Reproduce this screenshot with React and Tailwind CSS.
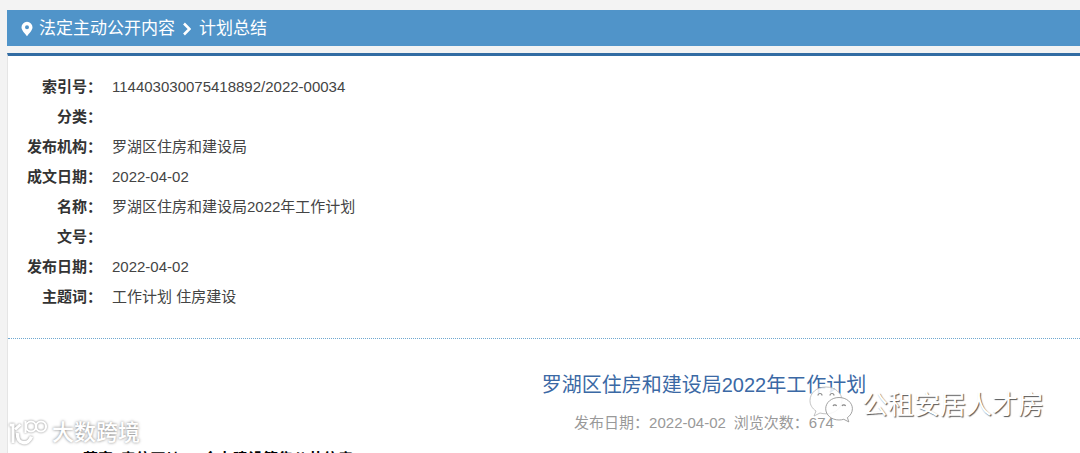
const details = [
    { label: '索引号', value: '114403030075418892/2022-00034' },
    { label: '分类', value: '' },
    { label: '发布机构', value: '罗湖区住房和建设局' },
    { label: '成文日期', value: '2022-04-02' },
    { label: '名称', value: '罗湖区住房和建设局2022年工作计划' },
    { label: '文号', value: '' },
    { label: '发布日期', value: '2022-04-02' },
    { label: '主题词', value: '工作计划 住房建设' },
];

const PinIcon = () => (
    <svg className="w-3 h-4 shrink-0" viewBox="0 0 12 16" fill="white" aria-hidden="true">
        <path fillRule="evenodd" d="M6 .8A5.500 5.500 0 0 0 .5 6.300C.5 9.500 4 12.500 6 15.200c2-2.700 5.500-5.700 5.500-8.900A5.500 5.500 0 0 0 6 .8Zm0 3.500a2 2 0 1 1 0 4 2 2 0 0 1 0-4Z" />
    </svg>
);

const ChevronIcon = () => (
    <svg className="w-2 h-4 shrink-0" viewBox="0 0 8 16" fill="none" stroke="white" strokeWidth="2.600" aria-hidden="true">
        <path d="M1 2.500 6.500 8 1 13.500" />
    </svg>
);

// Two overlapping chat bubbles
const ChatIcon = () => (
    <svg className="w-12 h-10 shrink-0" viewBox="0 0 48 40" fill="white" fillOpacity="0.850" stroke="#8a8a8a" strokeWidth="0.800" aria-hidden="true">
        <path stroke="#b4b4b4" d="M20 2C10.500 2 4 8 4 15.500c0 4.500 2.300 8 6 10.500l-2 5 6-3c2 .6 4 .8 6 .8 9 0 16-5.800 16-13.300S29 2 20 2Z" />
        <path d="M33 12.500c-7.500 0-13.300 5-13.300 11.200S25.500 35 33 35c1.700 0 3.300-.3 4.800-.7l5 2.600-1.400-4.300c3-2 5-5.200 5-8.900 0-6.200-6-11.200-13.400-11.200Z" />
        <g fill="none" strokeWidth="1.200">
            <path d="M12 10.500a2 2 0 0 1 4 0M24 10.500a2 2 0 0 1 4 0M27 21a2 2 0 0 1 3.600 0M36 21a2 2 0 0 1 3.600 0" />
        </g>
    </svg>
);

const HundredLogo = () => (
    <svg className="w-10 h-8 shrink-0 overflow-visible drop-shadow-[0_0_1px_#888888]" viewBox="0 0 40 32" fill="none" stroke="white" aria-hidden="true">
        <path strokeWidth="3" d="M1.500 8H5v18" />
        <path strokeWidth="3" d="M12.500 7.500 7 12.500" />
        <path strokeWidth="3.500" d="M9.500 16c-1 12 11 12.500 14 3.500" />
        <path strokeWidth="2.200" d="M17.500 4v12" />
        <circle strokeWidth="2.200" cx="23" cy="9.500" r="5" />
        <circle strokeWidth="2.200" cx="33" cy="9.500" r="5" />
    </svg>
);

const App = () => {
    return (
        <div className="relative h-screen overflow-hidden bg-[#f3f3f3] pl-[7px] pt-2.5 font-['Liberation_Sans','Noto_Sans_CJK_SC',sans-serif] text-[15px] text-[#444444]">
            {/* Breadcrumb */}
            <nav className="flex h-9 items-center bg-[#5094c9] px-3.5 pt-0.5 text-[17px] text-white">
                <PinIcon />
                <a href="#open" className="ml-1.5">法定主动公开内容</a>
                <span className="mx-2"><ChevronIcon /></span>
                <a href="#summary">计划总结</a>
            </nav>

            <main className="mt-[7px] border-l border-t-3 border-l-[#e5e5e5] border-t-[#326ca3] bg-white">
                {/* Document details */}
                <dl className="border-b border-dotted border-[#6fa8d0] pb-[26px] pt-4">
                    {details.map(item => (
                        <div key={item.label} className="flex h-[30px] items-center">
                            <dt className="w-[94px] shrink-0 text-right font-bold text-[#333333]">{item.label}：</dt>
                            <dd className="pl-2.5">{item.value}</dd>
                        </div>
                    ))}
                </dl>

                {/* Article */}
                <article className="px-[75px] pt-8">
                    <header className="flex flex-col items-center pl-80">
                        <h1 className="text-xl leading-7 text-[#3b69a5]">罗湖区住房和建设局2022年工作计划</h1>
                        <p className="mt-3 flex gap-2 leading-6 text-[#999999]">
                            <span>发布日期：2022-04-02</span>
                            <span>浏览次数：674</span>
                        </p>
                    </header>
                    <p className="mt-3 font-bold leading-6 text-black">落实“房住不炒”，全力建设筹集公共住房</p>
                </article>
            </main>

            {/* Watermarks */}
            <div className="absolute bottom-1 left-2 flex items-center gap-1 text-[22px] leading-8 font-medium text-white">
                <HundredLogo />
                <span className="[text-shadow:0_0_3px_#777777]">大数跨境</span>
            </div>
            <div className="absolute bottom-7 right-9 flex items-center gap-2 text-[26px] leading-10 text-white">
                <ChatIcon />
                <span className="[text-shadow:1px_1px_1px_#555555]">公租安居人才房</span>
            </div>
        </div>
    );
};

export default App;
